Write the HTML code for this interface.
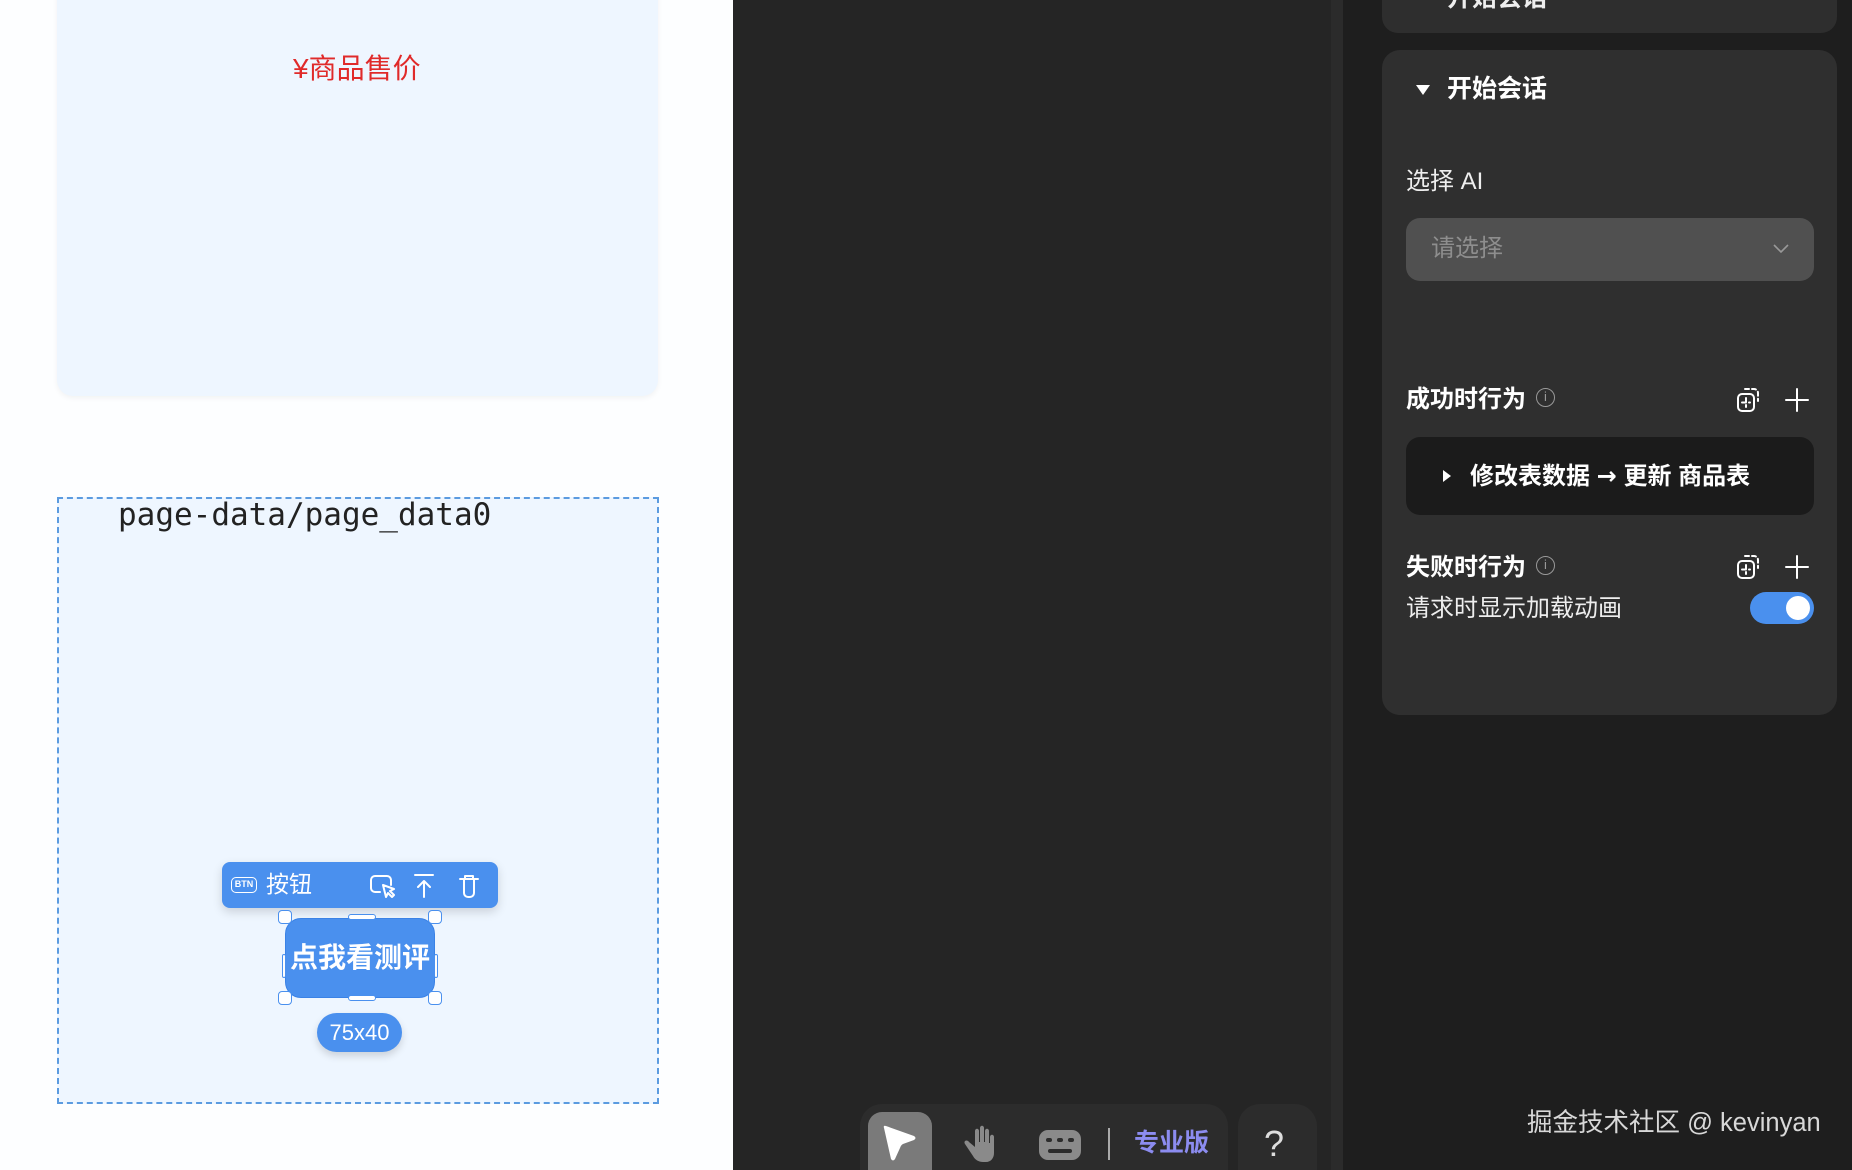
<!DOCTYPE html>
<html style="overflow:hidden;width:1852px;height:1170px"><head><meta charset="utf-8"><style>
*{margin:0;padding:0;box-sizing:border-box}
body{width:1852px;height:1170px;overflow:hidden;background:#1e1e1e;position:relative;font-family:"Liberation Sans","Noto Sans CJK SC",sans-serif}
.a{position:absolute}
.t{white-space:nowrap;line-height:1}
</style></head><body>
<div class="a" style="left:0;top:0;width:733px;height:1170px;background:#fdfeff"></div>
<div class="a" style="left:57px;top:-20px;width:601px;height:416px;background:#eef6ff;border-radius:16px;box-shadow:0 2px 6px rgba(0,0,0,0.05)"></div>
<div class="a t" style="left:293px;top:55px;font-size:28px;color:#e02a2a">¥商品售价</div>
<div class="a" style="left:57px;top:497px;width:602px;height:607px;background:#eef6ff;border:2px dashed #5b9be0"></div>
<div class="a t" style="left:118px;top:500px;font-family:'DejaVu Sans Mono','Liberation Mono',monospace;font-size:31px;color:#222">page-data/page_data0</div>
<!-- toolbar -->
<div class="a" style="left:222px;top:862px;width:276px;height:46px;background:#4a90ee;border-radius:8px;box-shadow:0 4px 10px rgba(0,0,0,0.15)"></div>
<div class="a t" style="left:231px;top:877px;width:26px;height:16px;border:1.5px solid #fff;border-radius:5px;color:#fff;font-size:9px;text-align:center;line-height:13px;font-weight:bold">BTN</div>
<div class="a t" style="left:266px;top:873px;font-size:23px;color:#fff">按钮</div>
<svg class="a" style="left:368px;top:872px" width="120" height="30" viewBox="0 0 120 30" fill="none" stroke="#fff" stroke-width="2" stroke-linecap="round" stroke-linejoin="round">
<path d="M12 20H7a4 4 0 0 1-4-4V8a4 4 0 0 1 4-4h12a4 4 0 0 1 4 4v5"/><path d="M15 13l3 12 2-4 4 4 2-2-4-4 4-2z"/>
<path d="M47 3h18M56 25V9M50 15l6-6 6 6"/>
<path d="M92 7h18M96 7v14a4 4 0 0 0 4 4h2a4 4 0 0 0 4-4V7M97 7V4h8v3"/>
</svg>
<!-- button -->
<div class="a" style="left:285px;top:918px;width:150px;height:80px;background:#4a90ee;border-radius:16px;border:1.5px solid #3a82e6"></div>
<div class="a t" style="left:283px;top:944px;width:154px;text-align:center;font-size:28px;color:#fff;font-weight:bold">点我看测评</div>
<div class="a" style="left:282px;top:954px;width:4px;height:24px;background:#fff;border:1px solid #4a90ee;border-radius:2px"></div>
<div class="a" style="left:434px;top:954px;width:4px;height:24px;background:#fff;border:1px solid #4a90ee;border-radius:2px"></div>
<div class="a" style="left:348px;top:914px;width:28px;height:6px;background:#fff;border:1px solid #4a90ee;border-radius:3px"></div>
<div class="a" style="left:348px;top:995px;width:28px;height:6px;background:#fff;border:1px solid #4a90ee;border-radius:3px"></div>
<div class="a" style="left:278px;top:910px;width:14px;height:14px;background:#fff;border:1.5px solid #4a90ee;border-radius:4px"></div>
<div class="a" style="left:428px;top:910px;width:14px;height:14px;background:#fff;border:1.5px solid #4a90ee;border-radius:4px"></div>
<div class="a" style="left:278px;top:991px;width:14px;height:14px;background:#fff;border:1.5px solid #4a90ee;border-radius:4px"></div>
<div class="a" style="left:428px;top:991px;width:14px;height:14px;background:#fff;border:1.5px solid #4a90ee;border-radius:4px"></div>
<div class="a t" style="left:317px;top:1013px;width:85px;height:39px;background:#4a90ee;border-radius:20px;color:#fff;font-size:22px;text-align:center;line-height:39px;box-shadow:0 4px 8px rgba(0,0,0,0.15)">75x40</div>
<!-- middle -->
<div class="a" style="left:733px;top:0;width:598px;height:1170px;background:#252525"></div>
<div class="a" style="left:1331px;top:0;width:12px;height:1170px;background:#2b2b2b"></div>
<div class="a" style="left:860px;top:1104px;width:368px;height:66px;background:#2c2c2c;border-radius:22px 22px 0 0"></div>
<div class="a" style="left:1238px;top:1104px;width:79px;height:66px;background:#2c2c2c;border-radius:22px 22px 0 0"></div>
<div class="a" style="left:868px;top:1112px;width:64px;height:58px;background:#7a7a7a;border-radius:14px 14px 0 0"></div>
<svg class="a" style="left:880px;top:1122px" width="40" height="40" viewBox="0 0 40 40"><path d="M4 6Q3 3 6 4L34 14Q37 16 34 18L23 22Q21 23 20 26L15 37Q13 40 11 37Z" fill="#fff"/></svg>
<svg class="a" style="left:960px;top:1124px" width="40" height="40" viewBox="0 0 40 40" fill="#8a8a8a"><path d="M9 18c-2-3-6-1-4 2l8 12c2 4 6 6 10 6h3c5 0 8-4 8-9V13c0-3-4-3-4 0v6h-1V7c0-3-4-3-4 0v11h-1V4c0-3-4-3-4 0v14h-1V7c0-3-4-3-4 0v16z"/></svg>
<div class="a" style="left:1039px;top:1130px;width:42px;height:30px;background:#8a8a8a;border-radius:9px"></div>
<div class="a" style="left:1046px;top:1138px;width:6px;height:4px;background:#2c2c2c;border-radius:2px"></div>
<div class="a" style="left:1057px;top:1138px;width:6px;height:4px;background:#2c2c2c;border-radius:2px"></div>
<div class="a" style="left:1068px;top:1138px;width:6px;height:4px;background:#2c2c2c;border-radius:2px"></div>
<div class="a" style="left:1048px;top:1149px;width:24px;height:4px;background:#2c2c2c;border-radius:2px"></div>
<div class="a" style="left:1108px;top:1128px;width:2px;height:32px;background:#aaa"></div>
<div class="a t" style="left:1134px;top:1131px;font-size:25px;color:#8c8cf0;font-weight:bold">专业版</div>
<div class="a t" style="left:1264px;top:1126px;font-size:36px;color:#ddd">?</div>
<!-- right -->
<div class="a" style="left:1382px;top:-20px;width:455px;height:53px;background:#2e2e2e;border-radius:16px"></div>
<div class="a t" style="left:1447px;top:-14px;font-size:25px;color:#eee;font-weight:bold">开始会话</div>
<div class="a" style="left:1382px;top:50px;width:455px;height:665px;background:#2f2f2f;border-radius:18px"></div>
<div class="a" style="left:1416px;top:85px;width:0;height:0;border-left:7px solid transparent;border-right:7px solid transparent;border-top:10px solid #fff"></div>
<div class="a t" style="left:1447px;top:77px;font-size:25px;color:#fff;font-weight:bold">开始会话</div>
<div class="a t" style="left:1406px;top:170px;font-size:24px;color:#eee">选择 AI</div>
<div class="a" style="left:1406px;top:218px;width:408px;height:63px;background:#505050;border-radius:14px"></div>
<div class="a t" style="left:1431px;top:237px;font-size:24px;color:#8e8e8e">请选择</div>
<svg class="a" style="left:1772px;top:242px" width="18" height="12" viewBox="0 0 18 12"><path d="M2 3l7 7 7-7" fill="none" stroke="#999" stroke-width="1.6"/></svg>
<div class="a t" style="left:1406px;top:388px;font-size:24px;color:#fff;font-weight:bold">成功时行为</div>
<div class="a t" style="left:1536px;top:388px;width:19px;height:19px;border:1.5px solid #999;border-radius:50%;color:#999;font-size:13px;text-align:center;line-height:16px">i</div>
<div class="a t" style="left:1406px;top:556px;font-size:24px;color:#fff;font-weight:bold">失败时行为</div>
<div class="a t" style="left:1536px;top:556px;width:19px;height:19px;border:1.5px solid #999;border-radius:50%;color:#999;font-size:13px;text-align:center;line-height:16px">i</div>
<svg class="a" style="left:1736px;top:386px" width="80" height="28" viewBox="0 0 80 28" fill="none" stroke="#fff" stroke-width="2" stroke-linecap="round">
<rect x="2" y="8" width="16" height="17" rx="4"/><path d="M10 12v9M6 16.5h8M9 3h9a4 4 0 0 1 4 4v8" stroke-dasharray="4 3"/>
<path d="M61 3v22M50 14h22"/></svg>
<svg class="a" style="left:1736px;top:553px" width="80" height="28" viewBox="0 0 80 28" fill="none" stroke="#fff" stroke-width="2" stroke-linecap="round">
<rect x="2" y="8" width="16" height="17" rx="4"/><path d="M10 12v9M6 16.5h8M9 3h9a4 4 0 0 1 4 4v8" stroke-dasharray="4 3"/>
<path d="M61 3v22M50 14h22"/></svg>
<div class="a" style="left:1406px;top:437px;width:408px;height:78px;background:#1b1b1b;border-radius:14px"></div>
<div class="a" style="left:1443px;top:470px;width:0;height:0;border-top:6px solid transparent;border-bottom:6px solid transparent;border-left:8px solid #fff"></div>
<div class="a t" style="left:1470px;top:464px;font-size:24px;color:#fff;font-weight:bold">修改表数据 <span style="font-family:'DejaVu Sans',sans-serif">→</span> 更新 商品表</div>
<div class="a t" style="left:1406px;top:597px;font-size:24px;color:#eee">请求时显示加载动画</div>
<div class="a" style="left:1750px;top:592px;width:64px;height:32px;background:#4a90ee;border-radius:16px"></div>
<div class="a" style="left:1786px;top:596px;width:24px;height:24px;background:#fff;border-radius:50%"></div>
<div class="a t" style="left:1527px;top:1111px;font-size:25.5px;color:#d8d8d8">掘金技术社区 @ kevinyan</div>
</body></html>
